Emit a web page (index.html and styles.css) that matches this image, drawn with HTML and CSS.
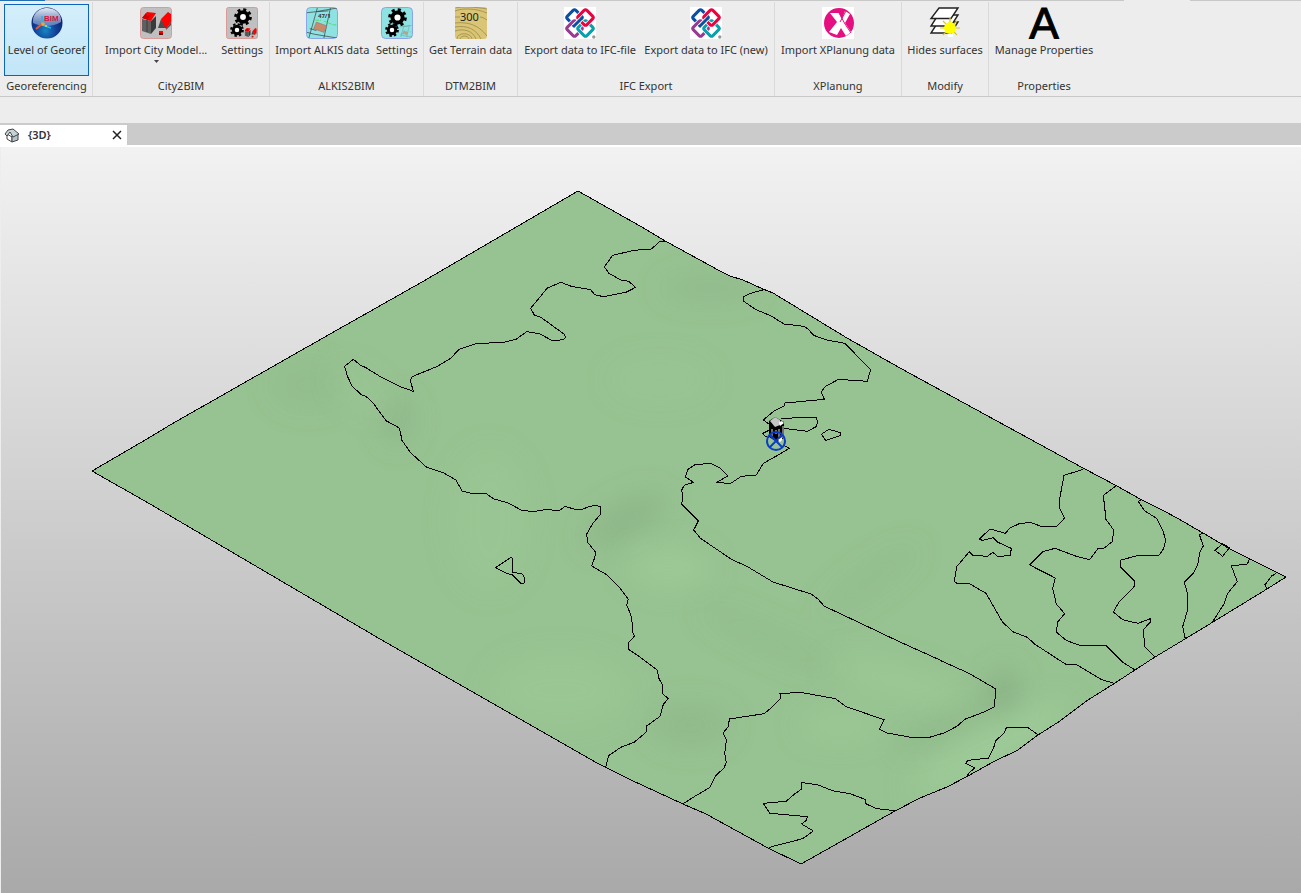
FILE: index.html
```html
<!DOCTYPE html>
<html lang="en">
<head>
<meta charset="utf-8">
<title>{3D}</title>
<link rel="stylesheet" href="styles.css">
</head>
<body>
<svg class="defs" aria-hidden="true">
  <defs>
    <symbol id="gear" viewBox="-12 -12 24 24">
      <circle r="6.4" fill="#fff" stroke="#000" stroke-width="5"/>
      <circle r="10" fill="none" stroke="#000" stroke-width="3.6" stroke-dasharray="4 3.854"/>
    </symbol>
    <symbol id="houses" viewBox="0 0 32 32">
      <path d="M2 12l9 2v13l-9-3z" fill="#606060"/>
      <path d="M11 14l5-5v12l-5 6z" fill="#3a3a3a"/>
      <path d="M7 13v12" stroke="#3a3a3a"/>
      <path d="M2 11l5-6 9 1-5 8z" fill="#f00"/>
      <path d="M2 11l4-5 1 3 4-2-3 5 3 2z" fill="#c00"/>
      <path d="M18 21l3-9 6 9z" fill="#4b4b4b"/>
      <path d="M21 12l7-7 3 2v8l-5 7z" fill="#f00"/>
      <path d="M26 22l5-7v3l-5 5z" fill="#4b4b4b"/>
      <path d="M19 25h4v3h-4z" fill="#611"/><path d="M19 24h4v2h-4z" fill="#f00"/>
    </symbol>
    <symbol id="parcel" viewBox="0 0 32 32">
      <path d="M0 5l9-1 23-4M11 0L2 32M25 0l-7 32M0 26l8 2 24 4M3 22l7 2M11 4l12-1" fill="none" stroke="#333" stroke-width=".7"/>
      <path d="M9 13h6M18 14l5 2 5 2h4" fill="none" stroke="#4cdf61" stroke-dasharray="4 1"/>
      <path d="M10 15l11 4-3 7-11-4z" fill="#c98a6b" stroke="#8a7870" stroke-width=".6"/>
    </symbol>
    <symbol id="ifc" viewBox="0 0 32 32">
      <rect width="32" height="32" fill="#fff"/>
      <g fill="none" stroke-width="3">
        <rect x="-6" y="-6" width="12" height="12" rx="2" transform="translate(10.500 10.500) rotate(45)" stroke="#0b4fa5"/>
        <rect x="-6" y="-6" width="12" height="12" rx="2" transform="translate(10.500 21.500) rotate(45)" stroke="#fff" stroke-width="4.600"/>
        <rect x="-6" y="-6" width="12" height="12" rx="2" transform="translate(10.500 21.500) rotate(45)" stroke="#993a90"/>
        <rect x="-6" y="-6" width="12" height="12" rx="2" transform="translate(21.500 21.500) rotate(45)" stroke="#fff" stroke-width="4.600"/>
        <rect x="-6" y="-6" width="12" height="12" rx="2" transform="translate(21.500 21.500) rotate(45)" stroke="#07a1ae"/>
        <rect x="-6" y="-6" width="12" height="12" rx="2" transform="translate(21.500 10.500) rotate(45)" stroke="#fff" stroke-width="4.600"/>
        <rect x="-6" y="-6" width="12" height="12" rx="2" transform="translate(21.500 10.500) rotate(45)" stroke="#e8043f"/>
        <path d="M17 12l-7 7" stroke="#fff" stroke-width="4.600"/><path d="M18 11l-9 9" stroke="#0b4fa5"/>
      </g>
      <circle cx="29.800" cy="30" r="1.700" fill="#999"/>
    </symbol>
  </defs>
</svg>

<header class="ribbon">
  <div class="ribbon-edge"><span class="edge-active"></span><span class="edge-line"></span><span class="edge-gap"></span><span class="edge-end"></span></div>
  <div class="panels">
    <section class="panel panel-first">
      <div class="tools">
        <button class="tool tool-active" type="button">
          <svg class="icon" viewBox="0 0 32 32" aria-hidden="true">
            <defs>
              <radialGradient id="globe" cx=".45" cy=".75" r=".7"><stop offset="0" stop-color="#1585c4"/><stop offset=".5" stop-color="#123f96"/><stop offset="1" stop-color="#0a1a62"/></radialGradient>
              <linearGradient id="shine" x2="0" y2="1"><stop offset="0" stop-color="#e4ecf6"/><stop offset="1" stop-color="#7c9acb" stop-opacity=".65"/></linearGradient>
            </defs>
            <circle cx="16" cy="16" r="15.500" fill="url(#globe)"/>
            <path d="M2 16C1 5 10 1 16 1s15 4 14 14c-8 5-20 5-28 1z" fill="url(#shine)"/>
            <path d="M11 18V9M11 18l9 3" stroke="#27b6ef" stroke-width="1.500"/>
            <path d="M11 17l-6 5" stroke="#f2542d" stroke-width="2"/>
            <circle cx="12" cy="17" r="1.800" fill="#f0a52d"/><circle cx="15" cy="19" r="1" fill="#d4e13e"/>
            <text x="13" y="14" class="bim">BIM</text>
          </svg>
          <span>Level of Georef</span>
        </button>
      </div>
      <h2 class="panel-title">Georeferencing</h2>
    </section>

    <section class="panel">
      <div class="tools">
        <button class="tool tool-menu" type="button">
          <svg class="icon" viewBox="0 0 32 32" aria-hidden="true"><rect x=".5" y=".5" width="31" height="31" rx="3" fill="#c0c0c0" stroke="#db9a9a"/><use href="#houses" width="32" height="32"/></svg>
          <span>Import City Model...</span>
          <svg class="caret" viewBox="0 0 5 3" aria-hidden="true"><path d="M0 0h5L2.500 3z" fill="#444"/></svg>
        </button>
        <button class="tool" type="button">
          <svg class="icon" viewBox="0 0 32 32" aria-hidden="true"><rect x=".5" y=".5" width="31" height="31" rx="2" fill="#c0c0c0" stroke="#db9a9a"/><use href="#gear" x="8" y="1" width="18" height="18"/><use href="#gear" x="4" y="16" width="14" height="14"/><use href="#houses" x="18" y="19" width="13" height="13"/></svg>
          <span>Settings</span>
        </button>
      </div>
      <h2 class="panel-title">City2BIM</h2>
    </section>

    <section class="panel">
      <div class="tools">
        <button class="tool" type="button">
          <svg class="icon" viewBox="0 0 32 32" aria-hidden="true"><rect x=".5" y=".5" width="31" height="31" rx="4" fill="#8ee2e2" stroke="#8aa6e6"/><use href="#parcel" x="1" y="1" width="30" height="30"/><text x="12" y="11" class="parcel-no">47/1</text></svg>
          <span>Import ALKIS data</span>
        </button>
        <button class="tool" type="button">
          <svg class="icon" viewBox="0 0 32 32" aria-hidden="true"><rect x=".5" y=".5" width="31" height="31" rx="4" fill="#8ee2e2" stroke="#8aa6e6"/><use href="#gear" x="7" y="1" width="19" height="19"/><use href="#gear" x="4" y="16" width="14" height="14"/><use href="#parcel" x="19" y="18" width="12" height="12" opacity=".7"/></svg>
          <span>Settings</span>
        </button>
      </div>
      <h2 class="panel-title">ALKIS2BIM</h2>
    </section>

    <section class="panel">
      <div class="tools">
        <button class="tool" type="button">
          <svg class="icon" viewBox="0 0 32 32" aria-hidden="true">
            <rect width="32" height="32" rx="3" fill="#d9c575"/>
            <g fill="none" stroke="#9c8a48" stroke-width=".8"><path d="M0 4c7-3 20-3 32 2M0 10h5M25 10c3 0 5 2 7 3M0 16c10-1 22 0 32 13M0 20c12-2 21 2 26 12M0 24c9-3 18 0 21 8M2 32c0-7 14-7 15 0M5 32c1-4 8-4 9 0M0 1c8-2 20-1 32 1"/></g>
            <text x="5" y="14" class="height">300</text>
          </svg>
          <span>Get Terrain data</span>
        </button>
      </div>
      <h2 class="panel-title">DTM2BIM</h2>
    </section>

    <section class="panel">
      <div class="tools">
        <button class="tool" type="button"><svg class="icon" aria-hidden="true"><use href="#ifc" width="32" height="32"/></svg><span>Export data to IFC-file</span></button>
        <button class="tool" type="button"><svg class="icon" aria-hidden="true"><use href="#ifc" width="32" height="32"/></svg><span>Export data to IFC (new)</span></button>
      </div>
      <h2 class="panel-title">IFC Export</h2>
    </section>

    <section class="panel">
      <div class="tools">
        <button class="tool" type="button">
          <svg class="icon" viewBox="0 0 32 32" aria-hidden="true"><rect width="32" height="32" fill="#fff"/><circle cx="17" cy="16" r="15" fill="#e60f82"/><path d="M8 6h9l3 6 3-8 5 3-5 9 6 9-5 4-5-8-4 7-8-3 8-10z" fill="#fff"/><path d="M17 6l6 11 6 9M24 4l-6 11" fill="none" stroke="#e60f82"/></svg>
          <span>Import XPlanung data</span>
        </button>
      </div>
      <h2 class="panel-title">XPlanung</h2>
    </section>

    <section class="panel">
      <div class="tools">
        <button class="tool" type="button">
          <svg class="icon" viewBox="0 0 32 32" aria-hidden="true">
            <g fill="#fff" stroke="#222" stroke-width="1.400"><path d="M9 15h20l-7 11H2z"/><path d="M9 8h20l-7 11H2z"/><path d="M10 1h19l-7 10.500H2z"/></g>
            <path d="M21 11v19M11 21h20M14 14l14 14M28 14L14 28" stroke="#d9c42e" stroke-width="1.200"/>
            <circle cx="21" cy="21" r="6" fill="#ff0"/><path d="M19 27h5v3h-5z" fill="#fff"/>
          </svg>
          <span>Hides surfaces</span>
        </button>
      </div>
      <h2 class="panel-title">Modify</h2>
    </section>

    <section class="panel panel-last">
      <div class="tools">
        <button class="tool" type="button">
          <svg class="icon" viewBox="0 0 32 32" aria-hidden="true"><text x="16" y="32" class="letter">A</text></svg>
          <span>Manage Properties</span>
        </button>
      </div>
      <h2 class="panel-title">Properties</h2>
    </section>
  </div>
</header>

<nav class="tabs" aria-label="Views">
  <div class="tab">
    <button class="tab-name" type="button">
      <svg class="tab-icon" viewBox="0 0 16 16" aria-hidden="true"><path d="M3 7l5 3v5l-5-3z" fill="#fff" stroke="#444"/><path d="M8 15V9l6-2v6z" fill="#b4c4ce" stroke="#444"/><path d="M1 7l3-4 5-1 6 5-6 3-3-5-3 4z" fill="#c6d2d9" stroke="#444"/></svg>
      {3D}
    </button>
    <button class="tab-close" type="button" aria-label="Close view"><svg viewBox="0 0 10 10" aria-hidden="true"><path d="M1 1l8 8M9 1L1 9" stroke="#222" stroke-width="1.500"/></svg></button>
  </div>
</nav>

<main class="view">
  <svg class="scene" viewBox="1 147 1300 746" role="img" aria-label="Terrain surface with contour lines">
    <defs>
      <clipPath id="land"><path id="outline" d="M578 191L422 282 330 334 170 425 152 436 92 471 150 504 380 639 597 763 605 767 631 780 683 804 706 814 768 848 801 864 833 846 895 811 920 798 947 787 968 776 993 762 1018 750 1038 735 1060 721 1088 700 1115 683 1135 670 1155 657 1185 639 1213 622 1267 589 1286 577 1230 549 1203 533 1177 518 1164 511 1140 499 1117 486 1083 468 1050 450 900 368 847 338 773 293 763 289 743 280 730 276 720 271 667 242 640 226z"/></clipPath>
      <filter id="soft" x="-50%" y="-50%" width="200%" height="200%"><feGaussianBlur stdDeviation="14"/></filter>
    </defs>
    <use href="#outline" fill="#97c291"/>
    <g clip-path="url(#land)">
      <g filter="url(#soft)" fill="#7fa47a">
        <ellipse cx="625" cy="520" rx="45" ry="16" opacity=".4" transform="rotate(-30 625 520)"/>
        <ellipse cx="1005" cy="692" rx="12" ry="24" opacity=".6"/>
        <ellipse cx="690" cy="725" rx="40" ry="22" opacity=".25"/>
        <ellipse cx="398" cy="420" rx="14" ry="24" opacity=".35"/>
        <ellipse cx="710" cy="288" rx="50" ry="12" opacity=".25"/>
        <ellipse cx="870" cy="580" rx="60" ry="14" opacity=".15" transform="rotate(-35 870 580)"/>
        <ellipse cx="310" cy="385" rx="40" ry="25" opacity=".15"/>
        <ellipse cx="950" cy="722" rx="60" ry="10" opacity=".35" transform="rotate(-28 950 722)"/>
        <ellipse cx="770" cy="640" rx="80" ry="14" opacity=".15" transform="rotate(25 770 640)"/>
      </g>
      <g filter="url(#soft)" fill="#a4d29e">
        <ellipse cx="670" cy="568" rx="40" ry="18" opacity=".5"/>
        <ellipse cx="990" cy="748" rx="90" ry="16" opacity=".6" transform="rotate(-28 990 748)"/>
        <ellipse cx="900" cy="682" rx="70" ry="16" opacity=".4" transform="rotate(15 900 682)"/>
        <ellipse cx="660" cy="380" rx="50" ry="22" opacity=".15"/>
        <ellipse cx="560" cy="690" rx="70" ry="36" opacity=".25"/>
        <ellipse cx="840" cy="725" rx="40" ry="14" opacity=".4"/>
        <ellipse cx="490" cy="520" rx="40" ry="70" opacity=".2"/>
        <ellipse cx="360" cy="390" rx="30" ry="12" opacity=".3" transform="rotate(40 360 390)"/>
      </g>
    </g>
    <g class="lines">
      <use href="#outline"/>
      <g transform="translate(330 180) scale(.33333)">
        <path d="M1012 184H990L964 207 912 211 848 226 823 261 837 280 872 300 896 304 917 322 890 336 820 350 794 344 782 329 724 319 693 307 652 324 602 385 613 405 633 412 703 463 706 472 700 479 667 482 628 461 590 455 558 478 520 487 437 491 387 508 362 535 320 560 246 590 241 601 250 634 208 619 148 588 106 562 92 556 70 538 44 559 52 588 66 618 95 645 108 649 130 670 168 722 208 744 216 780"/>
      </g>
      <g transform="translate(380 440) scale(.33333)">
        <path d="M65 0L92 38 140 82 190 98 228 120 246 153 275 160 320 162 342 177 385 189 425 211 460 215 500 208 537 213 555 199 585 208 608 208 625 200 645 196 661 200 661 224 639 249 620 282 623 307 646 336 645 350 635 378 680 404 718 442 745 478 740 495 752 523 757 550 756 574 764 588 746 607 746 628 771 645 832 690 836 714 847 734 849 762 865 776 850 793 840 829 800 858 799 876 762 907 722 922 686 947 677 982"/>
        <path d="M347 383L393 352 397 355V397L426 401 434 414 432 430 422 430 396 404 380 400z"/>
        <path d="M941 127L913 136 905 150 909 172 905 192 955 243 941 270 960 293"/>
      </g>
      <g transform="translate(640 220) scale(.33333)">
        <path d="M371 209L335 219 310 230V243L348 269 392 287 432 312 492 319 505 328 521 346 560 360 615 370 640 396 692 449 682 484 596 478 556 499 544 516 553 538 435 549 433 557 402 573 370 600 388 613M422 595L528 592 533 606 528 620 503 634 430 625M544 643L566 628 602 638V646L557 661zM388 630L367 641 378 650 388 653M430 676L448 685 420 702 370 730 349 765 304 769 272 790 229 788 263 768 242 745 215 731 190 732 165 734 143 749 136 771 161 787"/>
      </g>
      <path d="M700 538L731 559 748 567 773 582 811 594 818 599 824 606 860 623 900 642 940 660"/>
      <g transform="translate(940 450) scale(.33333)">
        <path d="M430 58L372 76 358 152 360 178 374 204 350 229H303L272 217 238 221 210 234 196 250 150 237 118 267 127 271 160 263 172 276 214 295 211 316 174 320 158 307 142 319 99 316 88 305 50 350 43 394 52 401 90 402 138 430 188 517 220 546 262 562 285 583 376 642 410 644 485 689 523 700M528 108L490 136 498 208 521 240 517 275 490 296H474L449 329 412 320 345 295 308 305 269 345 346 384 338 415 349 462 374 491 352 517 350 547 380 572 420 586H497L550 638 585 660M606 147L595 154 613 182 650 205 668 240 677 270 671 296 656 317 588 318 543 330 541 350 584 394 583 409 536 458 520 486 548 509 594 520 631 506 632 515 611 538 613 588 645 622M790 249L778 254 790 288 780 305 773 345 760 370 733 397 743 432 742 482 728 530 736 567M848 281L825 301 848 319 868 293zM930 325L922 342 874 348 892 395 863 430 853 460 818 515M1008 371L995 378 975 404 980 417M0 631L85 669 168 717"/>
      </g>
      <g transform="translate(680 660) scale(.33333)">
        <path d="M948 87L943 140 907 158 854 178 832 198 795 218 745 233H698L622 219 598 207 612 179 498 140 466 116 362 97 300 101 301 116 273 144 253 161 148 177 145 200 129 219 139 240 134 280 139 307 132 324 108 346 90 382 46 408 8 432M1075 225L1044 203H979L972 220 947 242 941 263 926 294 864 301 857 310 884 324 865 341 862 349M645 452L590 446 557 431 555 418 510 401 457 392 415 375 363 367 364 388 345 401 318 424 250 430 270 460 382 470 380 480 365 492 400 513 368 536 268 562"/>
      </g>
    </g>
    <g>
      <path d="M769 421l6-4 9 5v16l-7 4-8-5z" fill="#000"/>
      <path d="M770 421l5-4 5 3v5l-5 2z" fill="#c4c4c4"/>
      <path d="M779 422l3-1 2 2-4 3z" fill="#fff"/>
      <path d="M772 429v7M776 430v4M779 429v8M783 426v12" stroke="#ddd"/>
    </g>
    <g fill="none" stroke="#0a3cc8" stroke-width="2"><circle cx="776" cy="441" r="9"/><path d="M770 435l12 12M782 435l-12 12"/></g>
    <path d="M778 440l4-3v3l-2 2z" fill="#fff"/>
  </svg>
</main>
</body>
</html>
```

FILE: styles.css
```css
* { box-sizing: border-box; }
body {
  margin: 0;
  min-height: 100vh;
  display: flex;
  flex-direction: column;
  background: #ededed;
  color: #333;
  font: 11px/20px "Noto Sans", sans-serif;
}
button {
  font: inherit;
  color: inherit;
  background: none;
  border: 0;
  padding: 0;
}
.defs { position: absolute; width: 0; height: 0; }

.ribbon { border-bottom: 1px solid #c8c8c8; }
.ribbon-edge { display: flex; height: 1px; }
.edge-active { width: 45px; background: #1f6fb2; }
.edge-line { flex: 1; background: #c8c8c8; }
.edge-gap { width: 66px; }
.edge-end { width: 111px; background: #c8c8c8; }

.panels {
  display: grid;
  grid-template-columns: 93px 177px 154px 94px 257px 127px 87px 110px;
  padding-top: 1px;
}
.panel {
  display: flex;
  flex-direction: column;
  padding: 2px 2px 0;
  border-right: 1px solid #dadada;
}
.panel-first { padding: 2px 3px 0 4px; }
.panel-last { border-right: 0; }
.tools { display: flex; justify-content: space-around; }
.tool {
  display: flex;
  flex-direction: column;
  align-items: center;
  height: 72px;
  padding: 3px 3px 0;
  white-space: nowrap;
}
.tool-menu { padding: 3px 9px 0; }
.tool-active {
  flex: 1;
  border: 1px solid #0a64c0;
  padding: 2px 2px 0;
  background: linear-gradient(#d4eefb, #c2e6f8);
}
.icon { width: 32px; height: 32px; display: block; flex: none; }
.tool span { margin-top: 1px; }
.caret { width: 5px; height: 3px; }
.panel-title {
  margin: 0;
  font-size: 11px;
  font-weight: 400;
  line-height: 20px;
  text-align: center;
}
.bim { font: bold 8px "Liberation Sans", sans-serif; fill: #e01040; }
.parcel-no { font: bold 6px "Noto Sans", sans-serif; fill: #333; }
.height { font: 11px "Noto Sans", sans-serif; fill: #222; }
.letter { font: 45px "Liberation Sans", sans-serif; text-anchor: middle; fill: #000; stroke: #000; }

.tabs {
  display: flex;
  margin-top: 26px;
  padding-top: 2px;
  height: 24px;
  background: #cbcbcb;
  border-bottom: 2px solid #fff;
}
.tab {
  display: flex;
  align-items: center;
  justify-content: space-between;
  width: 127px;
  padding: 0 5px 0 4px;
  background: #fff;
}
.tab-name { display: flex; align-items: center; gap: 8px; font-weight: 600; }
.tab-icon { width: 16px; height: 16px; }
.tab-close { width: 10px; height: 10px; display: flex; }

.view {
  flex: 1;
  display: flex;
  margin-left: 1px;
  background: linear-gradient(#f2f2f2, #a9a9a9);
}
.scene { width: 100%; display: block; }
.lines {
  fill: none;
  stroke: #000;
  stroke-width: 1px;
  shape-rendering: crispEdges;
}
.lines path, .lines use { vector-effect: non-scaling-stroke; }
```
